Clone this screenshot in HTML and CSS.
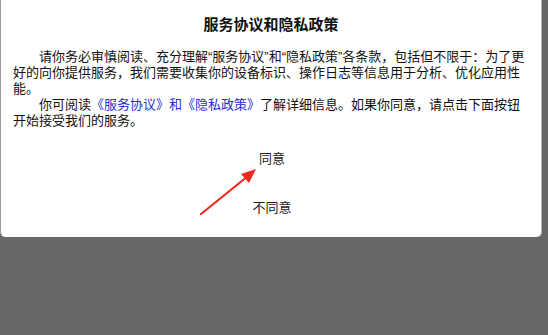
FILE: index.html
```html
<!DOCTYPE html>
<html lang="zh-CN">
<head>
<meta charset="utf-8">
<title>服务协议和隐私政策</title>
<link rel="stylesheet" href="styles.css">
</head>
<body>
<div class="dialog">
  <h1 class="title">服务协议和隐私政策</h1>
  <p class="para">请你务必审慎阅读、充分理解“服务协议”和“隐私政策”各条款，包括但不限于：为了更好的向你提供服务，我们需要收集你的设备标识、操作日志等信息用于分析、优化应用性能。<br><span class="indent"></span>你可阅读<span class="link">《服务协议》和《隐私政策》</span>了解详细信息。如果你同意，请点击下面按钮开始接受我们的服务。</p>
  <div class="actions">
    <div class="btn btn-agree">同意</div>
    <div class="btn btn-refuse">不同意</div>
  </div>
</div>
<svg class="arrow" width="70" height="60" viewBox="0 0 70 60">
  <line x1="3" y1="54" x2="50" y2="16" stroke="#f02a1e" stroke-width="2.2" stroke-linecap="round"/>
  <polygon points="58,9 43,14 51,23" fill="#f02a1e"/>
</svg>
</body>
</html>
```
FILE: styles.css
```css
html, body {
  margin: 0;
  padding: 0;
}
body {
  background: #676767;
  width: 548px;
  height: 335px;
  position: relative;
  font-family: "Liberation Sans", "Noto Sans CJK SC", sans-serif;
  color: #111;
}
.dialog {
  width: 542px;
  height: 237px;
  background: #fff;
  border-left: 1px solid #9a9a9a;
  border-right: 1px solid #b5b5b5;
  border-radius: 0 0 5px 5px;
  padding: 0 12px;
  box-sizing: border-box;
  display: flex;
  flex-direction: column;
}
.title {
  margin: 15px 0 0;
  font-size: 15px;
  line-height: 20px;
  font-weight: bold;
  text-align: center;
}
.para {
  margin: 14px 0 0;
  font-size: 13px;
  line-height: 16px;
  text-indent: 2em;
}
.indent {
  display: inline-block;
  width: 2em;
}
.link {
  color: #2b2bd0;
}
.actions {
  display: flex;
  flex-direction: column;
  align-items: center;
  margin-top: 21px;
  gap: 31px;
}
.btn {
  font-size: 13px;
  line-height: 18px;
  color: #222;
  margin-left: 2px;
}
.arrow {
  position: absolute;
  left: 198px;
  top: 160px;
}
```
